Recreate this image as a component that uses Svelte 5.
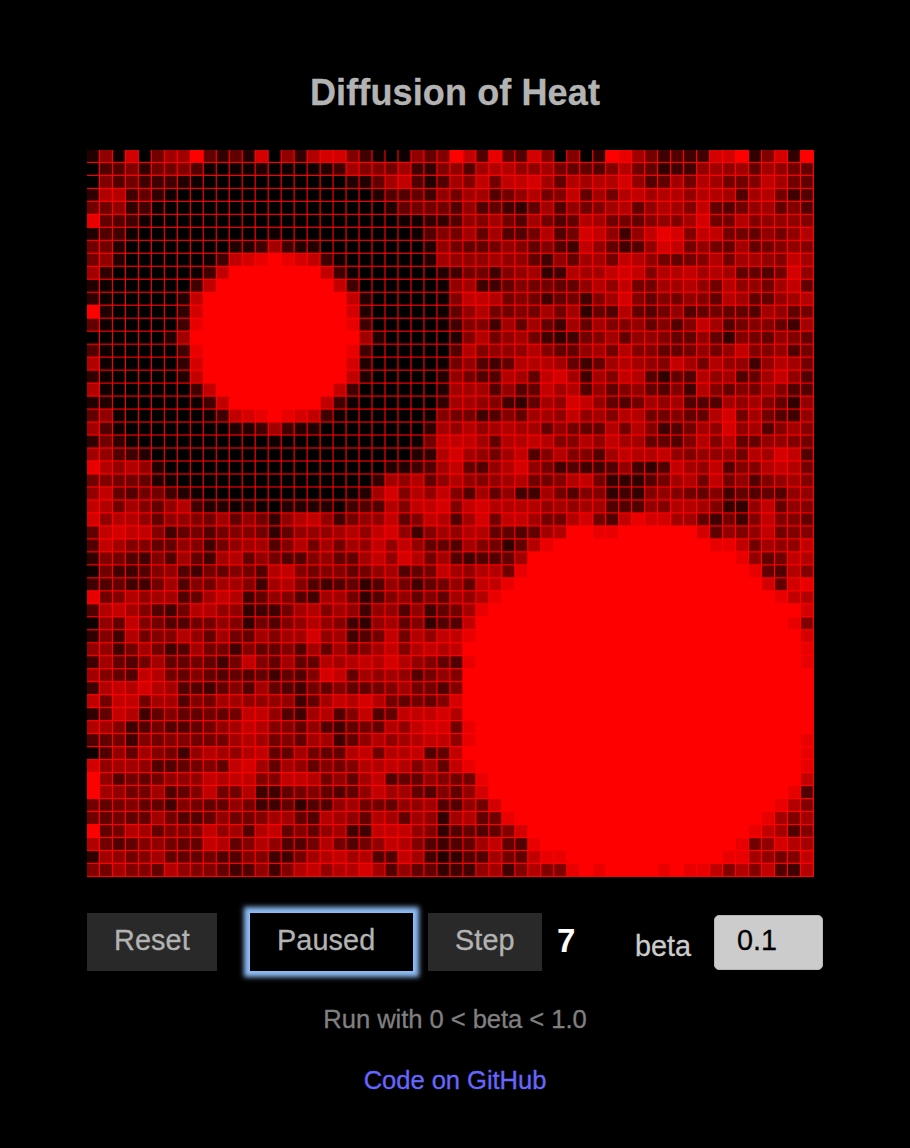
<script>
  const rows = [
    '291d07aaf6362d093b' + 'dd84101968fc5e65d80' + '803fea74544ddf38d3f',
    '055837785101120101' + '24a887a43895abb99a7' + '6658b763449a9a6a976',
    '085744421000000000' + '00226ac525a8c7ccda6' + 'babbd956a7ba778ca76',
    '3bb463100000000000' + '00002556497aa579b78' + 'c6a7bcabb9bba5ab745',
    '779341000000000000' + '00000267775956436a5' + '978ab69ba8c6579a685',
    'e65410000000000000' + '0000001133598a75a75' + '6ba776898ad77b89998',
    '254100000000001000' + '00000001587a6a557b5' + '7dc949ced8cc776979b',
    '77200000000224a422' + '0000000029766798685' + '4c96459dc7976a67898',
    '79200000014cdefedc' + '410000002a999a99649' + '6aa7cb97678b7aa98ca',
    'a300000014cfffffff' + 'c410000002477489a34' + 'baacdc8bbcaba6657d9',
    '210000004cffffffff' + 'fc400000019a4468776' + '69b9c77aab97b997ac6',
    '31000002cfffffffff' + 'ffc20000018ccb78746' + '748ad8687986ba669ab',
    'f2000003dfffffffff' + 'ffd200000169b7787a7' + 'a365b6579567665a967',
    '61000004efffffffff' + 'ffe40000014884a6a64' + 'a6a8896858ca578864a',
    '0000002affffffffff' + 'fffa20000028b79a743' + '478a699866963876986',
    '51000004efffffffff' + 'ffe40000005b8999b86' + '69a7b88667979c88957',
    'b1000003dfffffffff' + 'ffd200000179546bbba' + '646aba98ca7b9949ba7',
    '31000002cfffffffff' + 'ffc20000029755ba6cd' + 'a4a8cb5365b9a56ac95',
    'b10000004cffffffff' + 'fc40000002aaa5956ca' + 'b596896584b8687a855',
    '2200000014cfffffff' + 'c410000003aa98436a9' + 'dc9657a9a555a9a8639',
    '69100000014cdefedc' + '4100000018774586aa9' + 'c9a8bb77866bd7a7549',
    'a5100000000224a422' + '000000003a9b9abaa69' + '766b7b8457a9d9a58a8',
    '373100000000001000' + '000000017ccca6bbcb8' + '8b9caa6658b8b669987',
    'a95420000000000000' + '000000023bda97ac58b' + '885acbbc989997badc5',
    'eb9b92000000000000' + '000002245ac659bd974' + '54459435ca9c588bcb7',
    '787762100000000000' + '00003a9b69b989ab778' + 'bc733357ab7c79589a8',
    '9c6577421000000000' + '0012ad8b9c85a6944a7' + '5883438987684656599',
    'cb7a869b4221210222' + '21455b8ccd8cdbbbb9a' + '9aa55598bba8339c698',
    'd9bb969987a69739bc' + '94799c68cb5ad7cca77' + 'bd75ceddaa64748c886',
    '6cdcc8467578873699' + '9ab9cd948a9bb6656ab' + 'ffeeffffffd6989c788',
    '5ca886698479aa58b7' + 'a7a9c9c9665a8736bef' + 'fffffffffffeec7a99c',
    '3875485a64ab697558' + '966ac9db7a54556afff' + 'fffffffffffffe967cb',
    '17445895476875bc87' + '88679a567ca9bb7efff' + 'ffffffffffffffe65b8',
    '456447a587aa84ab85' + '456359746796cceffff' + 'fffffffffffffffd6de',
    'e78b9aa56acb469854' + 'aa73589686a9befffff' + 'ffffffffffffffffecb',
    '5bca8547bb993447ab' + '8a949959467aeffffff' + 'ffffffffffffffffffd',
    '196c8755779837589b' + '98439a68355cfffffff' + 'fffffffffffffffffe8',
    '384b788b96a76a8aad' + '9a457c7b9ccefffffff' + 'ffffffffffffffffffd',
    '9947a745a77486685a' + '6a78ac8bcbcffffffff' + 'ffffffffffffffffffe',
    '4a657a667647c86a66' + 'babcbdb9865efffffff' + 'ffffffffffffffffffe',
    'a865cb768656564658' + 'dc6a9a95798ffffffff' + 'fffffffffffffffffff',
    '4bcbdba554685a6547' + '686678a7758ffffffff' + 'fffffffffffffffffff',
    'c7cc7aa587aa999946' + 'acbdb76768dffffffff' + 'fffffffffffffffffff',
    '36cb46866767cc954a' + 'b58c56cccdbffffffff' + 'fffffffffffffffffff',
    'ba845755679acb8869' + '54676b9cdd7efffffff' + 'fffffffffffffffffff',
    '56748788777aba786a' + 'a469b9abcc9efffffff' + 'ffffffffffffffffffe',
    '1596a8749ba9bc66a7' + '66bc7bbc56cffffffff' + 'ffffffffffffffffffe',
    'd9aa9556786cda6a96' + '878bbcb8a6cefffffff' + 'ffffffffffffffffffe',
    'f95767999cbcc88ccb' + '796ac5669877effffff' + 'ffffffffffffffffffc',
    'fa977a568c77b44678' + '6569caa65869dffffff' + 'fffffffffffffffffe5',
    '767866487669744635' + '59a77699a5597dfffff' + 'ffffffffffffffffeb8',
    '76766a75569778aa65' + 'ba96ba6a93ab67effff' + 'fffffffffffffffea8a',
    'f67ba6888c9a5bc686' + '9a44ccc98356568dfff' + 'ffffffffffffffeca58',
    'b75689766cb68b9557' + 'b7579cb85456ac65eff' + 'fffffffffffffe79dba',
    '3a978a66675588447a' + 'bcab55ca42355a76cee' + 'ffffffffffffeea978c',
    '87a886b988645948bc' + '9bbda59663449a48b88' + 'efeffffefeec8b8c54b'
  ];

  const extent = 727;
  const pitch = extent / rows.length;
  const side = pitch - 1.15;

  // Red channel for each heat level, 0 (cold) to f (hot).
  const shades = [0, 14, 32, 48, 62, 80, 96, 112, 128, 144, 160, 176, 192, 210, 232, 255];

  const cells = rows.flatMap((row, y) =>
    [...row].map((level, x) => ({
      x: x * pitch,
      y: y * pitch,
      fill: `rgb(${shades[parseInt(level, 16)]},0,0)`
    }))
  );

  let beta = '0.1';
</script>

<main>
  <h1>Diffusion of Heat</h1>

  <svg class="plate" viewBox="0 0 {extent} {extent}" width={extent} height={extent} aria-label="Heat grid">
    <rect width={extent} height={extent} fill="#f00" />
    {#each cells as cell}
      <rect x={cell.x} y={cell.y} width={side} height={side} fill={cell.fill} />
    {/each}
  </svg>

  <div class="controls">
    <button class="reset">Reset</button>
    <button class="run">Paused</button>
    <button class="step">Step</button>
    <strong>7</strong>
    <label for="beta">beta</label>
    <input id="beta" bind:value={beta} />
  </div>

  <p>Run with 0 &lt; beta &lt; 1.0</p>
  <a href="#code">Code on GitHub</a>
</main>

<style>
  :global(body) {
    margin: 0;
    background: #000;
  }

  main {
    box-sizing: border-box;
    width: 910px;
    height: 1148px;
    padding-top: 72px;
    display: flex;
    flex-direction: column;
    align-items: center;
    overflow: hidden;
    background: #000;
    font-family: "Liberation Sans", Arial, sans-serif;
    -webkit-text-stroke: 0.3px currentColor;
  }

  h1 {
    margin: 0;
    height: 78px;
    font-size: 36px;
    line-height: 41px;
    letter-spacing: 0.12px;
    color: #b3b3b3;
  }

  .plate {
    display: block;
    flex: none;
    align-self: flex-start;
    margin-left: 87px;
  }

  .controls {
    display: flex;
    align-self: flex-start;
    align-items: flex-start;
    height: 58px;
    margin: 36px 0 0 87px;
    font-size: 28.8px;
    line-height: 33px;
  }

  button {
    box-sizing: border-box;
    height: 58px;
    margin: 0;
    padding: 0 0 3px 27px;
    border: 0;
    border-radius: 0;
    background: #292929;
    color: #b3b3b3;
    font: inherit;
    letter-spacing: 0.1px;
    text-align: left;
  }

  .reset {
    width: 130px;
  }

  .run {
    width: 163px;
    margin-left: 33px;
    background: #000;
    box-shadow: 0 0 5px 6px #8fbdf5;
  }

  .step {
    width: 114px;
    margin-left: 15px;
  }

  strong {
    width: 78px;
    padding: 9px 0 0 15px;
    font-size: 33px;
    line-height: 37px;
    color: #fff;
    box-sizing: border-box;
    -webkit-text-stroke: 0;
  }

  label {
    width: 94px;
    padding: 17px 0 0 15px;
    box-sizing: border-box;
    color: #ccc;
  }

  input {
    box-sizing: border-box;
    width: 109px;
    height: 55px;
    margin: 2px 0 0;
    padding: 0 0 4px 22px;
    border: 1px solid #b8b8b0;
    border-radius: 5px;
    background: #ccc;
    color: #000;
    font: inherit;
    outline: none;
  }

  p {
    margin: 33px 0 0;
    font-size: 25.6px;
    line-height: 30px;
    letter-spacing: -0.06px;
    color: #808080;
  }

  a {
    margin-top: 31px;
    font-size: 25.6px;
    line-height: 30px;
    letter-spacing: -0.06px;
    color: #66f;
    text-decoration: none;
  }
</style>
